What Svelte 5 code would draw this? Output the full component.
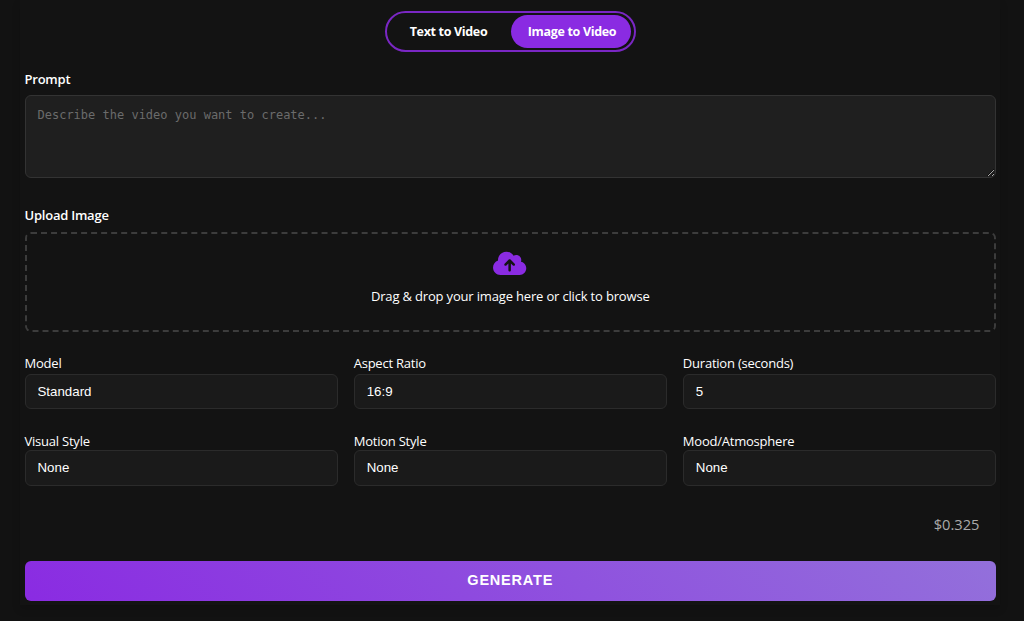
<script>
  let mode = $state('image');
  let prompt = $state('');

  const tabs = [
    { id: 'text', label: 'Text to Video' },
    { id: 'image', label: 'Image to Video' }
  ];

  const fields = [
    { id: 'model', label: 'Model', options: ['Standard', 'Pro'] },
    { id: 'ratio', label: 'Aspect Ratio', options: ['16:9', '9:16', '1:1'] },
    { id: 'duration', label: 'Duration (seconds)', options: ['5', '10'] },
    { id: 'visual', label: 'Visual Style', options: ['None'] },
    { id: 'motion', label: 'Motion Style', options: ['None'] },
    { id: 'mood', label: 'Mood/Atmosphere', options: ['None'] }
  ];
</script>

<main class="generator">
  <div class="tabs">
    {#each tabs as tab}
      <button class="tab" class:active={mode === tab.id} onclick={() => (mode = tab.id)}>
        {tab.label}
      </button>
    {/each}
  </div>

  <label class="heading" for="prompt">Prompt</label>
  <textarea id="prompt" bind:value={prompt} placeholder="Describe the video you want to create..."></textarea>

  <div class="heading upload-heading">Upload Image</div>
  <div class="dropzone">
    <svg class="cloud" viewBox="0 0 640 512" fill="currentColor">
      <path d="M144 480C64.5 480 0 415.5 0 336c0-62.8 40.2-116.2 96.2-135.9c-.1-2.7-.2-5.4-.2-8.1c0-88.4 71.6-160 160-160c59.3 0 111 32.2 138.7 80.2C409.9 102 428.3 96 448 96c53 0 96 43 96 96c0 12.2-2.3 23.8-6.4 34.6C596 238.4 640 290.1 640 352c0 70.7-57.3 128-128 128H144zm79-217c-9.4 9.4-9.4 24.6 0 33.9s24.6 9.4 33.9 0l39-39V392c0 13.3 10.7 24 24 24s24-10.7 24-24V257.9l39 39c9.4 9.4 24.6 9.4 33.9 0s9.4-24.6 0-33.9l-80-80c-9.4-9.4-24.6-9.4-33.9 0l-80 80z"/>
    </svg>
    <span class="hint">Drag &amp; drop your image here or click to browse</span>
  </div>

  <div class="options">
    {#each fields as field}
      <div class="field">
        <label for={field.id}>{field.label}</label>
        <select id={field.id}>
          {#each field.options as option}
            <option>{option}</option>
          {/each}
        </select>
      </div>
    {/each}
  </div>

  <div class="price">$0.325</div>
  <button class="generate">GENERATE</button>
</main>

<style>
  :global(body) {
    background: #121212;
    overflow: hidden;
  }

  .generator {
    box-sizing: border-box;
    height: 605px;
    margin: 0 24px 16px 20px;
    padding: 11px 4px 0 4.5px;
    display: flex;
    flex-direction: column;
    background: #131313;
    box-shadow: 0 4px 8px rgba(0, 0, 0, 0.15);
    color: #fff;
    font-family: "Segoe UI", "Open Sans", sans-serif;
    font-size: 13px;
  }

  .tabs {
    box-sizing: border-box;
    display: flex;
    align-self: center;
    width: 251px;
    height: 41px;
    margin-right: 0.5px;
    padding: 2px 3px;
    border: 2px solid #7a27c4;
    border-radius: 21px;
  }

  .tab {
    flex: 1;
    height: 33px;
    padding: 0 3px 0 0;
    border: none;
    border-radius: 17px;
    background: none;
    color: #fff;
    font-family: inherit;
    font-size: 12.5px;
    font-weight: 700;
    letter-spacing: -0.33px;
    white-space: nowrap;
    cursor: pointer;
  }
  .tab.active {
    flex: 0 0 120px;
    padding: 0 0 0 3px;
    background: #8a2be2;
  }

  .heading {
    height: 18px;
    margin-top: 18px;
    line-height: 18px;
    font-weight: 600;
    letter-spacing: -0.23px;
  }
  .upload-heading { margin-top: 28px; }

  textarea {
    box-sizing: border-box;
    width: 100%;
    height: 83px;
    margin: 7px 0 0;
    padding: 12px;
    border: 1px solid #333;
    border-radius: 6px;
    background: #1f1f1f;
    color: #fff;
    font-family: "DejaVu Sans Mono", monospace;
    font-size: 12px;
    outline: none;
    resize: vertical;
  }
  textarea::placeholder { color: #6b6b6b; }

  .dropzone {
    box-sizing: border-box;
    height: 100px;
    margin-top: 8px;
    padding-top: 16px;
    display: flex;
    flex-direction: column;
    align-items: center;
    border: 2px dashed #3c3c3c;
    border-radius: 6px;
    cursor: pointer;
  }
  .cloud {
    width: 33.3px;
    height: 26.6px;
    margin-right: 0.5px;
    color: #8a2be2;
  }
  .hint {
    margin-top: 10px;
    line-height: 18px;
    letter-spacing: -0.17px;
  }

  .options {
    display: grid;
    grid-template-columns: repeat(3, 1fr);
    gap: 24px 16px;
    margin-top: 24px;
  }
  .field {
    display: flex;
    flex-direction: column;
  }
  .field label {
    height: 18px;
    line-height: 15px;
    letter-spacing: -0.22px;
  }
  .field:nth-child(n + 4) label {
    height: 17px;
    line-height: 16px;
  }

  select {
    box-sizing: border-box;
    width: 100%;
    height: 35.4px;
    padding: 0 12px 1px;
    border: 1px solid #2b2b2b;
    border-radius: 6px;
    background: #1a1a1a;
    color: #fff;
    font-family: Arial, "Liberation Sans", sans-serif;
    font-size: 13.3px;
    appearance: none;
    outline: none;
  }

  .price {
    margin: 27px 16.5px 0 0;
    height: 22px;
    line-height: 22px;
    color: #aaa;
    font-size: 14.7px;
    text-align: right;
  }

  .generate {
    height: 40px;
    margin-top: 26px;
    padding: 0 0 2px;
    border: none;
    border-radius: 6px;
    background: linear-gradient(45deg, #8a2be2, #9370db);
    color: #fff;
    font-family: Arial, "Liberation Sans", sans-serif;
    font-size: 14.5px;
    font-weight: 700;
    letter-spacing: 0.8px;
    cursor: pointer;
  }
</style>
